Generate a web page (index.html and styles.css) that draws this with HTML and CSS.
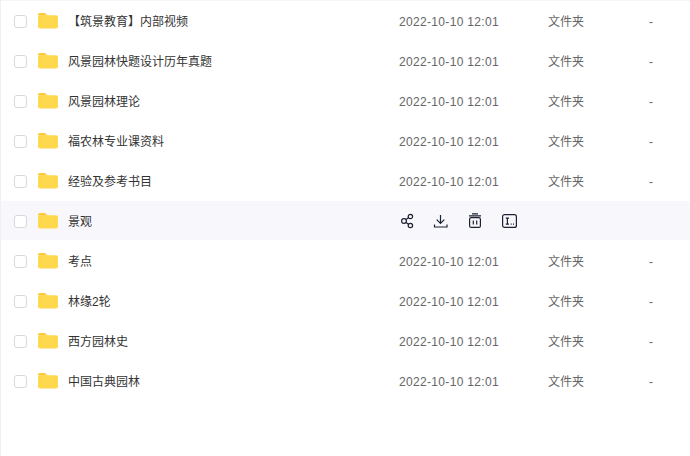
FILE: index.html
```html
<!DOCTYPE html>
<html lang="zh">
<head>
<meta charset="utf-8">
<title>文件列表</title>
<link rel="stylesheet" href="styles.css">
</head>
<body>
<svg class="defs" width="0" height="0" aria-hidden="true">
  <symbol id="folder" viewBox="0 0 20 16">
    <path fill="#fdc93f" d="M0 2C0 .9.7 0 1.800 0h4.600c.7 0 1.200.2 1.700.7L9.800 2.400H0z"/>
    <path fill="#ffd84d" d="M0 3.400C0 2.700.6 2.200 1.300 2.200h16.900C19.200 2.200 20 3 20 4v9.600c0 1-.8 1.800-1.800 1.800H1.800C.8 15.400 0 14.600 0 13.600z"/>
  </symbol>
</svg>
<main class="list">
  <div class="row"><span class="check"></span><svg class="folder"><use href="#folder"/></svg><span class="name">【筑景教育】内部视频</span><span class="date">2022-10-10 12:01</span><span class="type">文件夹</span><span class="size">-</span></div>
  <div class="row"><span class="check"></span><svg class="folder"><use href="#folder"/></svg><span class="name">风景园林快题设计历年真题</span><span class="date">2022-10-10 12:01</span><span class="type">文件夹</span><span class="size">-</span></div>
  <div class="row"><span class="check"></span><svg class="folder"><use href="#folder"/></svg><span class="name">风景园林理论</span><span class="date">2022-10-10 12:01</span><span class="type">文件夹</span><span class="size">-</span></div>
  <div class="row"><span class="check"></span><svg class="folder"><use href="#folder"/></svg><span class="name">福农林专业课资料</span><span class="date">2022-10-10 12:01</span><span class="type">文件夹</span><span class="size">-</span></div>
  <div class="row"><span class="check"></span><svg class="folder"><use href="#folder"/></svg><span class="name">经验及参考书目</span><span class="date">2022-10-10 12:01</span><span class="type">文件夹</span><span class="size">-</span></div>
  <div class="row row-hover"><span class="check"></span><svg class="folder"><use href="#folder"/></svg><span class="name">景观</span>
    <span class="actions">
      <svg class="icon" viewBox="0 0 16 16"><circle cx="5" cy="8" r="2.400"/><circle cx="11.400" cy="3.500" r="2.200"/><circle cx="11.400" cy="12.500" r="2.200"/><path d="M7 6.600l2.600-1.900M7 9.400l2.600 1.900"/></svg>
      <svg class="icon" viewBox="0 0 16 16"><path d="M7.500 2v8.500M3.700 6.700l3.800 3.800 3.800-3.800M1.500 11.500v2.500h12.500v-2.500"/></svg>
      <svg class="icon" viewBox="0 0 16 16"><path d="M5 .8h6M2 2.800h12"/><rect x="2.600" y="4.700" width="10.800" height="9.700" rx="1.500"/><path d="M6.300 7.500v4M9.700 7.500v4"/></svg>
      <svg class="icon" viewBox="0 0 16 16"><rect x="1.600" y="1.600" width="13.800" height="12.800" rx="2"/><path d="M4.800 5.200h3.200M6.400 5.200v6M4.800 11.200h3.200M9.700 11.200h1M12 11.200h1"/></svg>
    </span>
  </div>
  <div class="row"><span class="check"></span><svg class="folder"><use href="#folder"/></svg><span class="name">考点</span><span class="date">2022-10-10 12:01</span><span class="type">文件夹</span><span class="size">-</span></div>
  <div class="row"><span class="check"></span><svg class="folder"><use href="#folder"/></svg><span class="name">林缘2轮</span><span class="date">2022-10-10 12:01</span><span class="type">文件夹</span><span class="size">-</span></div>
  <div class="row"><span class="check"></span><svg class="folder"><use href="#folder"/></svg><span class="name">西方园林史</span><span class="date">2022-10-10 12:01</span><span class="type">文件夹</span><span class="size">-</span></div>
  <div class="row"><span class="check"></span><svg class="folder"><use href="#folder"/></svg><span class="name">中国古典园林</span><span class="date">2022-10-10 12:01</span><span class="type">文件夹</span><span class="size">-</span></div>
</main>
</body>
</html>
```
FILE: styles.css
```css
html, body {
  margin: 0;
  padding: 0;
  height: 100%;
  background: #fff;
  overflow: hidden;
}
.defs {
  display: block;
  height: 0;
}
.list {
  box-sizing: border-box;
  height: 456px;
  border-left: 1px solid #f0f0f2;
  border-top: 1px solid #f5f5f6;
  font-family: "Liberation Sans", "Noto Sans CJK SC", sans-serif;
  font-size: 12px;
  line-height: 16px;
  color: #333;
}
.row {
  display: flex;
  align-items: center;
  height: 40px;
  box-sizing: border-box;
}
.row-hover {
  background: #f8f8fc;
  box-shadow: inset 0 -1px 0 #fff;
}
.check {
  box-sizing: border-box;
  flex: none;
  width: 13px;
  height: 13px;
  margin-left: 13px;
  margin-top: 1px;
  background: #fff;
  border: 1px solid #d9d9d9;
  border-radius: 3px;
}
.folder {
  flex: none;
  width: 20px;
  height: 16px;
  margin-left: 11px;
}
.name,
.date,
.type,
.size {
  flex: none;
  padding-top: 2px;
}
.name {
  width: 331px;
  margin-left: 10px;
  color: #333;
}
.date {
  width: 149px;
  color: #666;
  letter-spacing: 0.33px;
}
.type {
  width: 101px;
  color: #666;
}
.size {
  color: #666;
}
.actions {
  display: flex;
  align-items: center;
  gap: 18px;
}
.icon {
  flex: none;
  width: 16px;
  height: 16px;
  fill: none;
  stroke: #1c2233;
  stroke-width: 1.2;
  display: block;
}
```
